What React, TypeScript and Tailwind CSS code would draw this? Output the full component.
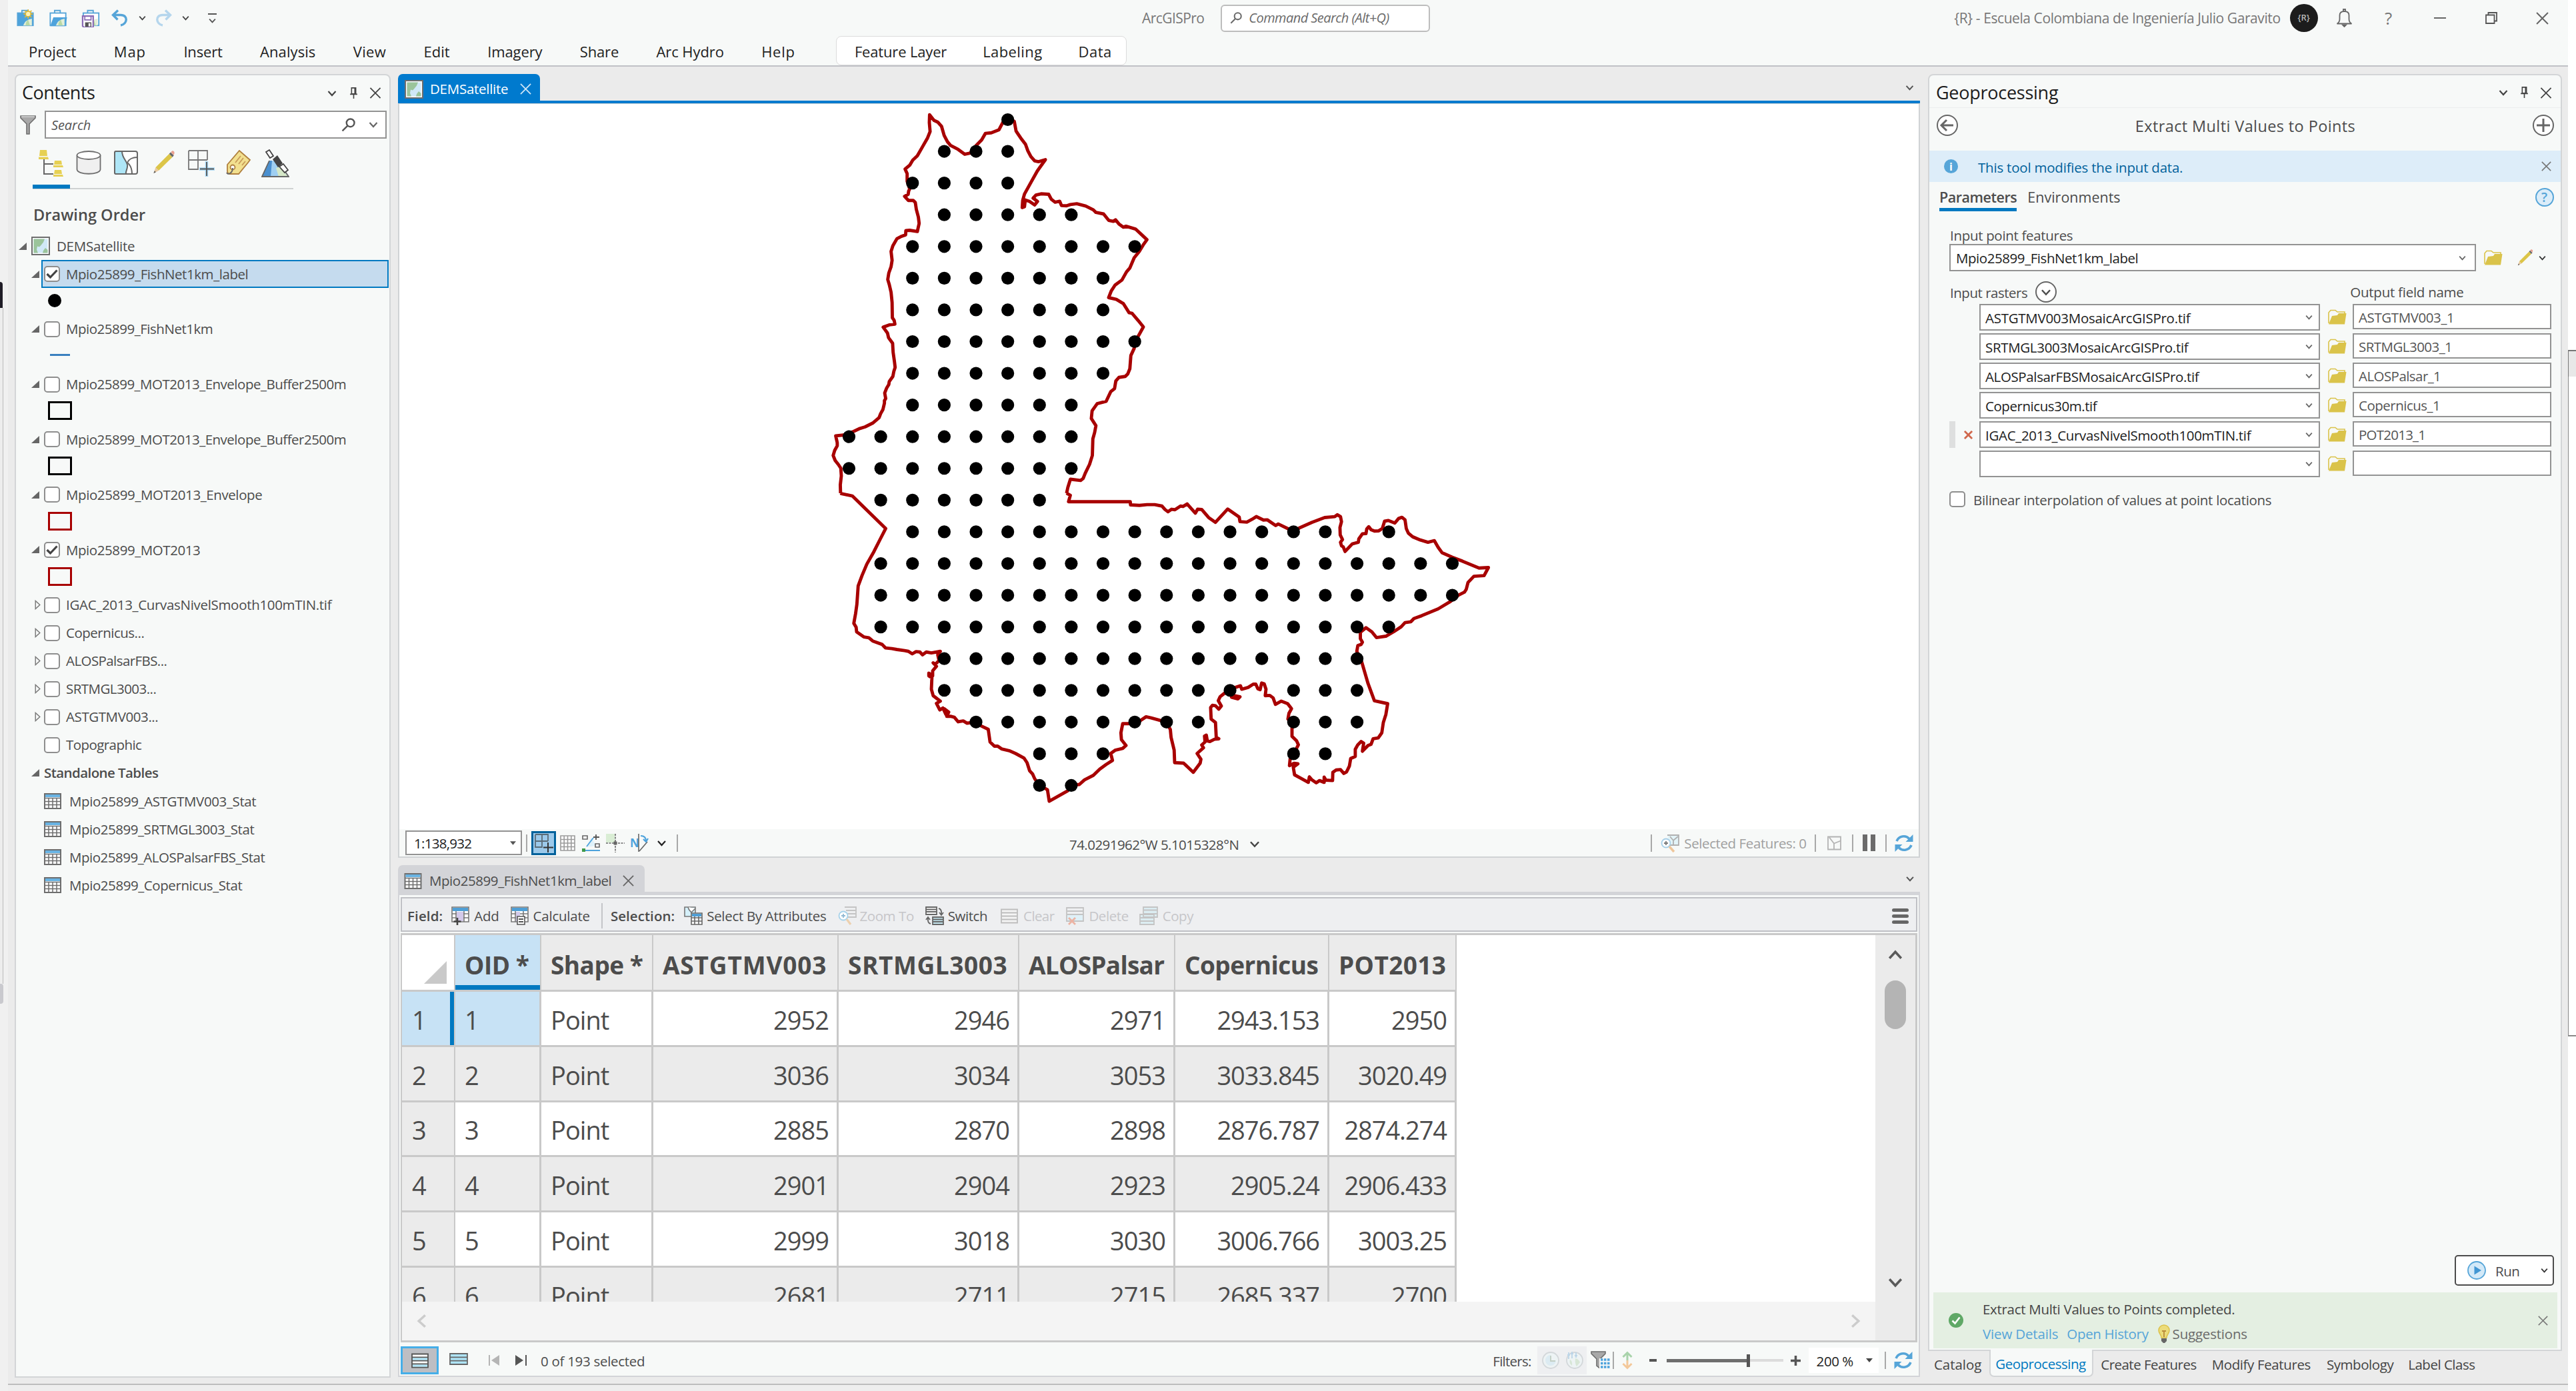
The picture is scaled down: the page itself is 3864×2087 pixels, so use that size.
import React, { useLayoutEffect, useRef } from "react";

/* Text run whose tracking is adjusted so that it fills the given width. */
function T({ w, className = "", children }: { w: number; className?: string; children: string }) {
  const ref = useRef<HTMLSpanElement>(null);
  useLayoutEffect(() => {
    const el = ref.current;
    if (!el) return;
    el.style.letterSpacing = "0px";
    const natural = el.getBoundingClientRect().width;
    el.style.letterSpacing = `${(w + 0.3 - natural) / children.length}px`;
  }, [w, children]);
  return (
    <span ref={ref} className={`shrink-0 whitespace-pre ${className}`}>
      {children}
    </span>
  );
}

type IconProps = { className?: string };

const Chevron = ({ className = "" }: IconProps) => (
  <svg viewBox="0 0 14 10" className={`shrink-0 ${className}`} fill="none" stroke="currentColor" strokeWidth="2.2">
    <path d="M1.5 2 7 8l5.500-6" />
  </svg>
);
const Close = ({ className = "" }: IconProps) => (
  <svg viewBox="0 0 18 18" className={`shrink-0 ${className}`} fill="none" stroke="currentColor" strokeWidth="1.900">
    <path d="M1 1 17 17M17 1 1 17" />
  </svg>
);
const Pin = ({ className = "" }: IconProps) => (
  <svg viewBox="0 0 14 20" className={`shrink-0 ${className}`} fill="none" stroke="currentColor" strokeWidth="1.800">
    <path d="M3.500 1h7v10h-7zM1 11.500h12M7 11.500V19M9 1v10" />
  </svg>
);
const Magnifier = ({ className = "" }: IconProps) => (
  <svg viewBox="0 0 20 20" className={`shrink-0 ${className}`} fill="none" stroke="currentColor" strokeWidth="2.300">
    <circle cx="13" cy="7" r="5.600" />
    <path d="M9 11 1.500 18.500" />
  </svg>
);
const Caret = ({ className = "" }: IconProps) => (
  <svg viewBox="0 0 10 6" className={`shrink-0 ${className}`} fill="currentColor">
    <path d="M0 0h10L5 6z" />
  </svg>
);
const MapIcon = ({ className = "" }: IconProps) => (
  <svg viewBox="0 0 28 28" className={`shrink-0 ${className}`}>
    <rect x="1" y="1" width="26" height="26" fill="#fff" stroke="#6e6e6e" strokeWidth="2" />
    <rect x="3.500" y="3.500" width="21" height="21" fill="#d0e8f7" />
    <path d="M3.500 3.500H20l-2 5-4 5-2 2-3-1-1 5 2 5H3.500zM18 21l3-4 3.500 3v4.500H17z" fill="#9bc49b" />
  </svg>
);
const TableIcon = ({ className = "" }: IconProps) => (
  <svg viewBox="0 0 26 24" className={`shrink-0 ${className}`}>
    <rect x="1" y="1" width="24" height="22" fill="#fff" stroke="#6e6e6e" strokeWidth="2" />
    <rect x="2" y="2" width="22" height="4" fill="#68b3e3" />
    <path d="M1 7.500h24M1 12.500h24M1 17.500h24M7 7v16M13 7v16M19 7v16" stroke="#6e6e6e" strokeWidth="1.500" />
  </svg>
);
const Refresh = ({ className = "" }: IconProps) => (
  <svg viewBox="0 0 28 28" className={`shrink-0 ${className}`} fill="none" stroke="#56a5d8" strokeWidth="3.600">
    <path d="M3 11C6 3.500 16 1 22 7.500M25 17c-3 7.500-13 10-19 3.500" />
    <path d="M27.500 1v11h-11zM.5 27V16h11z" fill="#56a5d8" stroke="none" />
  </svg>
);
const Folder = ({ className = "" }: IconProps) => (
  <svg viewBox="0 0 28 23" className={`shrink-0 ${className}`}>
    <path d="M1 21V5l3-3.500h7L14 4h11v4" fill="none" stroke="#dac34a" strokeWidth="1.600" />
    <path d="M1 22.500 6 10l8-1 2-3h11.500L25 22.500z" fill="#dac34a" />
  </svg>
);
const Pencil = ({ className = "" }: IconProps) => (
  <svg viewBox="0 0 34 36" className={`shrink-0 ${className}`}>
    <path d="M1 35 4 26l5 4.500z" fill="#e8c9a0" />
    <path d="M1 35l1.300-4 2.300 2.200z" fill="#5b5b5b" />
    <path d="M4 26 25 5l5 5L9 30.500z" fill="#dcc548" />
    <path d="m25 5 2.200-2.500 5 5L30 10z" fill="#666" />
    <path d="m27.500 2.200 2-1.700c2-.8 4 1.500 3.500 3.500l-1 3z" fill="#ea9f8e" />
  </svg>
);
const OpenTri = ({ className = "" }: IconProps) => (
  <svg viewBox="0 0 12 11" className={`shrink-0 ${className}`}>
    <path d="M12 0v11H0z" fill="#666" />
  </svg>
);
const ClosedTri = ({ className = "" }: IconProps) => (
  <svg viewBox="0 0 9 16" className={`shrink-0 ${className}`}>
    <path d="M1 1.500v13L8 8z" fill="none" stroke="#777" strokeWidth="1.500" />
  </svg>
);
const Funnel = ({ className = "" }: IconProps) => (
  <svg viewBox="0 0 24 29" className={`shrink-0 ${className}`}>
    <path d="M1 1h22v3l-9 9v15h-4V13L1 4z" fill="#a8a8a8" stroke="#6e6e6e" strokeWidth="1.600" />
    <path d="M2 2h20" stroke="#e8e8e8" strokeWidth="1.200" />
  </svg>
);
const Sep = ({ className = "" }: IconProps) => <span className={`w-[2px] shrink-0 bg-[#a8a8a8] ${className}`} />;

function Project({ kind, className }: { kind: "new" | "open" | "save"; className: string }) {
  return (
    <svg viewBox="0 0 30 30" className={`shrink-0 ${className}`}>
      <path d="M9 7V3h9v4" fill="none" stroke="#56a5d8" strokeWidth="2" />
      <rect x="2" y="7" width="25" height="20" fill={kind === "new" ? "#4ea3dc" : "#fff"} stroke="#56a5d8" strokeWidth="2" />
      {kind === "open" && <path d="M2 28 7 14h22l-3 14z" fill="#4ea3dc" />}
      <path d="M11 27q3-9 14-11v11z" fill="#e3efd8" />
      <path d="M15 27q0-6 4-9l3 9z" fill="#b9d9a5" />
      {kind === "new" && (
        <g stroke="#dcb93a" strokeWidth="1.800" fill="#fff3b5">
          <path d="M19 1v15M11.500 8.500h15M13.500 3l11 11M24.500 3l-11 11" />
          <circle cx="19" cy="8.500" r="4.300" />
        </g>
      )}
      {kind === "save" && (
        <g>
          <path d="M1 12h17v18H3l-2-2z" fill="#fff" stroke="#8a6bb5" strokeWidth="2.400" />
          <path d="M4.500 12v6h10v-6" fill="none" stroke="#8a6bb5" strokeWidth="1.800" />
          <rect x="5" y="22" width="10" height="7" fill="#555" />
          <rect x="10.500" y="23.500" width="3" height="5" fill="#fff" />
        </g>
      )}
    </svg>
  );
}
const Undo = ({ className = "" }: IconProps) => (
  <svg viewBox="0 0 26 26" className={`shrink-0 ${className}`} fill="none" stroke="currentColor" strokeWidth="3.400">
    <path d="M3 8.500h11c12 0 10 14 0 15.500" />
    <path d="M10 1.500 2.500 8.500l7 7" />
  </svg>
);

const ribbon: [string, number][] = [
  ["Project", 71], ["Map", 48], ["Insert", 58], ["Analysis", 83], ["View", 49],
  ["Edit", 39], ["Imagery", 82], ["Share", 58], ["Arc Hydro", 101], ["Help", 50],
];

function TitleBar() {
  return (
    <header className="h-[100px] shrink-0 border-b-2 border-[#c0c1c6] bg-[#f7f9f8]">
      <div className="flex h-[54px] items-center text-[21px] text-[#777]">
        <Project kind="new" className="ml-[12px] h-[28px] w-[29px]" />
        <Project kind="open" className="ml-[20px] h-[28px] w-[29px]" />
        <Project kind="save" className="ml-[20px] h-[28px] w-[30px]" />
        <Undo className="ml-[15px] h-[26px] w-[26px] text-[#56a5d8]" />
        <Chevron className="ml-[15px] h-[8px] w-[11px] text-[#444]" />
        <Undo className="ml-[13px] h-[26px] w-[26px] -scale-x-100 text-[#b5d6ed]" />
        <Chevron className="ml-[15px] h-[8px] w-[11px] text-[#444]" />
        <span className="ml-[28px] flex flex-col items-center gap-[5px] text-[#555]">
          <span className="h-[2px] w-[13px] bg-[#555]" />
          <Chevron className="h-[8px] w-[13px]" />
        </span>
        <T w={93} className="ml-[1388px] pt-[1px]">ArcGISPro</T>
        <div className="ml-[25px] flex h-[41px] w-[314px] items-center rounded-[6px] border-2 border-[#bdbdbd] bg-white pl-[12px] text-[#6a6a6a]">
          <Magnifier className="h-[18px] w-[18px]" />
          <T w={210} className="ml-[10px] text-[20px] italic">Command Search (Alt+Q)</T>
        </div>
        <T w={489} className="ml-[786px] pt-[2px]">{"{R} - Escuela Colombiana de Ingeniería Julio Garavito"}</T>
        <span className="ml-[14px] flex h-[42px] w-[42px] shrink-0 items-center justify-center rounded-full bg-[#1c1c1c]">
          <T w={18} className="text-[13px] font-semibold text-[#b8b8b8]">{"{R}"}</T>
        </span>
        <svg viewBox="0 0 24 28" className="ml-[27px] h-[28px] w-[25px] shrink-0" fill="none" stroke="#666" strokeWidth="1.800">
          <path d="M1 22.500q4-2 4-7V10q0-6 7-6t7 6v5.500q0 5 4 7zM10.500 4V1h3v3" />
          <path d="M9.500 24.500h5L12 27z" fill="#666" />
        </svg>
        <span className="ml-[45px] w-[18px] shrink-0 text-center text-[26px] leading-none">?</span>
        <span className="ml-[59px] h-[2px] w-[18px] shrink-0 bg-[#666]" />
        <svg viewBox="0 0 18 18" className="ml-[59px] h-[18px] w-[18px] shrink-0" fill="none" stroke="#555" strokeWidth="1.800">
          <path d="M1 4.500h12.500V17H1zM4.500 4V1H17v12.500h-3.500" />
        </svg>
        <Close className="ml-[58px] h-[19px] w-[19px] text-[#666]" />
      </div>
      <div className="flex h-[44px] items-center gap-[56.400px] pl-[31px] text-[22px] text-[#222]">
        {ribbon.map(([name, w]) => (
          <T key={name} w={w} className="pt-[2px]">{name}</T>
        ))}
        <div className="ml-[5px] flex h-full w-[436px] items-center gap-[54px] rounded-[8px] border border-[#dcdcdc] bg-white pl-[27px] pt-[2px]">
          <T w={138}>Feature Layer</T>
          <T w={89}>Labeling</T>
          <T w={50}>Data</T>
        </div>
      </div>
    </header>
  );
}

function Check({ on = false }: { on?: boolean }) {
  return (
    <span className="flex h-[24px] w-[24px] shrink-0 items-center justify-center rounded-[5px] border-2 border-[#8e8e8e] bg-white">
      {on && (
        <svg viewBox="0 0 18 14" className="h-[14px] w-[18px]" fill="none" stroke="#444" strokeWidth="3.200">
          <path d="m1.500 7 5 5L16.500 1.500" />
        </svg>
      )}
    </span>
  );
}

type Layer = { name: string; w: number; on?: boolean; sym?: string; selected?: boolean };
const layers: Layer[] = [
  { name: "Mpio25899_FishNet1km_label", w: 273, on: true, sym: "dot", selected: true },
  { name: "Mpio25899_FishNet1km", w: 220, sym: "line" },
  { name: "Mpio25899_MOT2013_Envelope_Buffer2500m", w: 420, sym: "black" },
  { name: "Mpio25899_MOT2013_Envelope_Buffer2500m", w: 420, sym: "black" },
  { name: "Mpio25899_MOT2013_Envelope", w: 294, sym: "red" },
  { name: "Mpio25899_MOT2013", w: 201, on: true, sym: "red" },
];
const rasters: [string, number][] = [
  ["IGAC_2013_CurvasNivelSmooth100mTIN.tif", 398], ["Copernicus...", 117], ["ALOSPalsarFBS...", 151],
  ["SRTMGL3003...", 135], ["ASTGTMV003...", 138],
];
const tables: [string, number][] = [
  ["Mpio25899_ASTGTMV003_Stat", 280], ["Mpio25899_SRTMGL3003_Stat", 277],
  ["Mpio25899_ALOSPalsarFBS_Stat", 293], ["Mpio25899_Copernicus_Stat", 259],
];

function ListTabs() {
  return (
    <div className="ml-[25px] mt-[14px] flex h-[62px] w-[391px] shrink-0 items-start border-b-2 border-[#cfd2d2]">
      <div className="flex h-[61px] w-[56px] items-start border-b-[6px] border-[#0079c1] pl-[7px] pt-[3px]">
        <svg viewBox="0 0 40 40" className="h-[40px] w-[40px]">
          <path d="M10 14v22h14M10 21h14" fill="none" stroke="#666" strokeWidth="2" />
          <path d="M4 0h10l1 9H3zM2 10.500h14l1 3.500H2zM26 16h10l1 6H25zM24 23h14l1 3H24zM26 30h10l1 6H25zM24 37h14l1 3H24z" fill="#e6d053" />
        </svg>
      </div>
      <svg viewBox="0 0 38 36" className="ml-[9px] mt-[4px] h-[36px] w-[38px]" stroke="#6e6e6e" strokeWidth="1.800" fill="#f0f0f0">
        <path d="M1.500 7v21c0 9 35 9 35 0V7" />
        <ellipse cx="19" cy="7" rx="17.500" ry="6" fill="#fff" />
      </svg>
      <svg viewBox="0 0 36 36" className="ml-[19px] mt-[4px] h-[36px] w-[36px]" stroke="#666" strokeWidth="2">
        <rect x="1" y="1" width="34" height="34" rx="3" fill="#fff" />
        <path d="M12 1c0 10 7 14 8 20s-3 10-2 14H3q-2 0-2-2V3q0-2 2-2z" fill="#aee6f7" />
        <path d="M20 18c2-5 8-8 15-8M20 18c5 4 7 10 7 17" fill="none" />
      </svg>
      <Pencil className="ml-[22px] mt-[4px] h-[35px] w-[34px]" />
      <svg viewBox="0 0 40 40" className="ml-[19px] mt-[3px] h-[40px] w-[40px]" fill="none">
        <path d="M1 1h28v14M1 1v28h14V1M1 15h28" stroke="#777" strokeWidth="1.800" />
        <path d="M28 17v23M17 28.500h23" stroke="#a8d8f5" strokeWidth="4.500" />
        <path d="M28 18v21M18 28.500h21" stroke="#555" strokeWidth="1.800" />
      </svg>
      <svg viewBox="0 0 38 38" className="ml-[17px] mt-[3px] h-[38px] w-[38px]" stroke="#b0803f" strokeWidth="1.800">
        <path d="M2 22 20 1l16 14-3 4-14 17H5q-3-1-3-4z" fill="#f2e08f" />
        <path d="m14 19 8-10M19 21l7-9M24 23l5-6" stroke="#c89a5a" fill="none" />
        <circle cx="10" cy="26" r="3.500" fill="#fff" />
        <path d="M10 27q0 6-4 8t-5-1" fill="none" stroke="#666" />
      </svg>
      <svg viewBox="0 0 42 42" className="ml-[15px] mt-[2px] h-[42px] w-[42px]">
        <path d="M12 17h7l22 24H1z" fill="#9fcff2" />
        <path d="M12 17 1 41h13l2-24z" fill="#4a90d0" />
        <path d="m22 28 6-2 12 15H26z" fill="#d5e8c8" />
        <path d="M12 17 1 41h40L32 28" fill="none" stroke="#666" strokeWidth="1.800" />
        <path d="m17 15 7-6 8 12-7 6z" fill="#444" />
        <path d="m7 4 5-3 6 9-5 3zM27 26l6-4 7 9-5 4z" fill="#fff" stroke="#444" strokeWidth="1.800" />
      </svg>
    </div>
  );
}

function Contents() {
  return (
    <aside className="flex h-[1956px] w-[564px] shrink-0 flex-col rounded-t-[8px] border-2 border-[#d3d5d7] bg-[#f7f9f8] text-[20.500px] text-[#4c4c4c]">
      <div className="flex h-[49px] shrink-0 items-center pl-[9px] pt-[4px] text-[#444]">
        <T w={109} className="text-[27px] text-[#1d1d1d]">Contents</T>
        <Chevron className="ml-[349px] h-[10px] w-[14px]" />
        <Pin className="ml-[19px] h-[18px] w-[13px]" />
        <Close className="ml-[17px] h-[17px] w-[18px]" />
      </div>
      <div className="mt-[4px] flex h-[42px] shrink-0 items-center pl-[6px]">
        <Funnel className="h-[29px] w-[24px]" />
        <div className="ml-[13px] flex h-[42px] w-[513px] items-center border-2 border-[#939393] bg-white pl-[8px]">
          <T w={59} className="pt-[2px] text-[20px] italic text-[#555]">Search</T>
          <Magnifier className="ml-[376px] h-[21px] w-[21px] text-[#555]" />
          <Chevron className="ml-[20px] h-[10px] w-[14px] text-[#666]" />
        </div>
      </div>
      <ListTabs />
      <T w={168} className="ml-[26px] mt-[21px] self-start text-[23.500px] font-semibold leading-[34px]">Drawing Order</T>
      <div className="mt-[9px] flex h-[42px] shrink-0 items-center pl-[4px]">
        <OpenTri className="h-[11px] w-[12px]" />
        <MapIcon className="ml-[7px] h-[28px] w-[28px]" />
        <T w={117} className="ml-[10px]">DEMSatellite</T>
      </div>
      {layers.map((l, i) => (
        <div key={i} className="shrink-0">
          <div className="flex h-[42px] items-center pl-[23px]">
            <OpenTri className="h-[11px] w-[12px]" />
            <div className={`ml-[3px] flex h-[42px] w-[521px] items-center border-2 pl-[2px] ${l.selected ? "border-[#0079c1] bg-[#c5dbee]" : "border-transparent"}`}>
              <Check on={l.on} />
              <T w={l.w} className="ml-[9px]">{l.name}</T>
            </div>
          </div>
          <div className="flex h-[40.800px] items-center pl-[48px]">
            {l.sym === "dot" && <span className="mb-[2px] h-[20px] w-[20px] rounded-full bg-black" />}
            {l.sym === "line" && <span className="mb-[5px] ml-[3px] h-[3px] w-[30px] bg-[#3a80bf]" />}
            {l.sym === "black" && <span className="mb-[3px] h-[28px] w-[36px] border-[3px] border-black" />}
            {l.sym === "red" && <span className="mb-[3px] h-[28px] w-[36px] border-[3px] border-[#a80000]" />}
          </div>
        </div>
      ))}
      {rasters.map(([name, w]) => (
        <div key={name} className="flex h-[42px] shrink-0 items-center pl-[28px]">
          <ClosedTri className="h-[15px] w-[9px]" />
          <span className="ml-[5px]"><Check /></span>
          <T w={w} className="ml-[9px]">{name}</T>
        </div>
      ))}
      <div className="flex h-[42px] shrink-0 items-center pl-[42px]">
        <Check />
        <T w={113} className="ml-[9px]">Topographic</T>
      </div>
      <div className="flex h-[42px] shrink-0 items-center pl-[23px]">
        <OpenTri className="h-[11px] w-[12px]" />
        <T w={171} className="ml-[7px] font-semibold">Standalone Tables</T>
      </div>
      {tables.map(([name, w]) => (
        <div key={name} className="flex h-[42px] shrink-0 items-center pl-[42px] pt-[1px]">
          <TableIcon className="h-[24px] w-[26px]" />
          <T w={w} className="ml-[12px]">{name}</T>
        </div>
      ))}
    </aside>
  );
}

/* Fishnet rows: inclusive column ranges of the 1 km points inside the boundary. */
const fishnet: [number, number][][] = [
  [[5, 5]], [[3, 5]], [[2, 5]], [[3, 7]], [[2, 9]], [[2, 8]], [[2, 8]], [[2, 9]], [[2, 8]], [[2, 7]], [[0, 7]],
  [[0, 7]], [[1, 6]], [[2, 15], [17, 17]], [[1, 19]], [[1, 19]], [[1, 17]], [[3, 16]], [[3, 12], [14, 16]],
  [[4, 11], [14, 16]], [[6, 8], [14, 15]], [[6, 7]],
];
const north =
  "159,1568 158,1535 162,1500 160,1470 150,1455 138,1440 130,1420 136,1400 146,1382 146,1370 140,1343 170,1340 205,1328 235,1314 255,1308 285,1293 310,1272 316,1256 325,1240 331,1215 331,1205 336,1197 332,1175 340,1155 348,1142 350,1130 364,1110 368,1090 373,1075 370,1050 365,1015 363,980 347,958 343,940 326,917 350,908 372,905 369,890 362,880 361,820 357,780 350,750 344,730 348,705 357,680 361,655 357,620 364,598 380,570 395,562 414,555 415,538 430,537 460,542 467,510 464,485 456,455 452,428 444,420 425,420 410,404 424,396 426,383 430,375 420,345 420,315 412,297 430,282 442,262 460,245 480,210 500,175 510,150 507,115 508,84 525,106 540,113 555,130 565,165 578,190 590,204 620,220 646,239 668,234 690,205 712,183 727,157 750,155 780,143 800,105 814,95 840,110 847,148 865,175 884,200 893,225 905,248 920,265 935,268 962,260 930,305 905,350 880,395 873,420 871,448 880,445 883,418 900,424 920,438 931,424 914,411 925,399 945,394 975,396 985,415 1000,427 1018,423 1025,440 1045,441 1060,436 1085,433 1120,442 1150,457 1160,467 1190,473 1210,498 1228,502 1237,496 1250,512 1268,525 1278,521 1315,532 1340,555 1360,574 1345,595 1330,620 1310,645 1293,685 1280,700 1262,732 1235,752 1220,775 1210,801 1240,808 1268,825 1290,860 1302,863 1325,890 1346,916 1330,945 1313,975 1310,1000 1297,1028 1293,1080 1285,1100 1275,1110 1250,1114 1238,1128 1233,1158 1218,1170 1200,1208 1165,1217 1145,1245 1142,1275 1160,1303 1155,1330 1148,1355 1146,1420 1135,1455 1118,1490 1110,1510 1100,1518 1060,1513 1050,1545 1045,1568";
const east =
  "-262,116 -247,125 -254,153 -12,153 -11,167 24,169 54,166 84,166 112,172 124,187 136,197 150,186 163,188 185,172 195,174 211,163 243,203 252,186 268,187 295,222 322,243 370,185 415,220 418,240 445,242 465,230 482,218 510,233 525,232 558,257 568,250 605,270 628,283 650,268 700,243 750,222 790,218 800,210 812,218 816,240 810,265 811,298 820,318 812,330 816,345 823,350 830,370 858,337 882,330 884,315 898,293 912,292 915,272 923,262 932,275 945,281 962,280 976,270 985,238 1000,235 1025,246 1040,226 1053,221 1065,232 1070,270 1078,290 1095,306 1125,320 1155,330 1180,323 1195,352 1210,375 1250,395 1290,412 1355,442 1392,440 1375,475 1335,478 1312,505 1305,535 1298,547 1275,560 1240,590 1195,620 1130,650 1100,662 1088,676 1065,680 1050,698 1020,720 990,739 953,745 935,720 912,702 890,722 890,750 898,765 893,775 880,780 876,805 895,850 920,945 945,1020 997,1033 990,1080 980,1115 974,1160 960,1182 940,1186 932,1210 920,1215 898,1240 903,1205 893,1198 880,1212 870,1232 870,1263 852,1272 847,1305 836,1330 825,1337 812,1320 795,1322 782,1332 781,1368 755,1366 748,1353 748,1376 730,1368 717,1378 700,1365 690,1352 686,1376 660,1360 632,1343 627,1310 645,1295 630,1293 612,1303 615,1270 628,1253 647,1212 640,1195 622,1175 622,1140 628,1113 606,1100 610,1075 620,1055 605,1033 580,1022 557,1036 548,1008 535,997 517,998 520,970 513,947 503,943 497,972 488,968 480,948 470,948 450,962 425,970 420,955 400,962 377,977 385,1005 410,1012 418,1003 395,998 377,977 360,985 340,1003 333,1020 345,1043 335,1057 322,1042 310,1040 303,1050 305,1100 322,1115 325,1180 335,1186 318,1188 300,1198 290,1195 286,1170 279,1174 281,1200 268,1213 275,1225 250,1250 265,1275 262,1292 235,1332 197,1292 162,1290 160,1235 148,1180 145,1145 129,1113 70,1095 50,1090 30,1105 7,1113";
const south =
  "1313,1113 1290,1120 1265,1120 1258,1160 1260,1190 1278,1215 1265,1228 1235,1236 1218,1250 1225,1280 1200,1298 1175,1318 1150,1345 1115,1365 1095,1385 1062,1389 1050,1412 977,1458 970,1408 939,1389 920,1360 912,1340 900,1325 890,1290 878,1270 845,1250 820,1238 790,1230 775,1218 762,1218 745,1200 738,1145 710,1130 690,1113 655,1118 640,1108 620,1112 605,1092 590,1088 575,1088 583,1070 565,1055 572,1080 560,1052 548,1060 535,1032 550,1022 538,1012 522,998 515,970 517,920 505,912 505,900 520,912 520,890 535,870 522,855 530,862 545,845 540,820 550,805 515,812 495,808 480,820 470,808 455,806 440,816 425,805 410,802 380,797 360,793 335,790 322,775 285,760 270,746 250,742 222,720 220,700 211,683 218,640 223,600 228,520 243,475 262,425 290,370 315,315 336,270 205,128 162,118 159,116";

function MapCanvas() {
  return (
    <svg viewBox="599 156 2279 1088" className="h-[1088px] w-[2279px] shrink-0 bg-white">
      <g fill="none" stroke="#a80000" strokeWidth="4.900" strokeLinejoin="round">
        <polyline points={north} transform="translate(1200 140) scale(.38265)" vectorEffect="non-scaling-stroke" />
        <polyline points={east} transform="translate(1700 700) scale(.38265 .34439)" vectorEffect="non-scaling-stroke" />
        <polyline points={south} transform="translate(1200 700) scale(.38265 .34439)" vectorEffect="non-scaling-stroke" />
      </g>
      {fishnet.flatMap((ranges, r) =>
        ranges.flatMap(([a, b]) =>
          Array.from({ length: b - a + 1 }, (_, k) => (
            <circle key={`${r}-${a + k}`} cx={1273.5 + 47.63 * (a + k)} cy={179.5 + 47.57 * r} r="9.600" />
          )),
        ),
      )}
    </svg>
  );
}

function MapView() {
  return (
    <section className="flex shrink-0 flex-col text-[20.500px]">
      <div className="flex h-[40px] items-end border-b-0">
        <div className="flex h-[40px] w-[213px] items-center rounded-t-[7px] bg-[#007ace] pl-[10px] pt-[5px] text-white">
          <MapIcon className="h-[28px] w-[28px]" />
          <T w={117} className="ml-[10px]">DEMSatellite</T>
          <Close className="ml-[18px] h-[17px] w-[17px] text-[#cfe6f7]" />
        </div>
        <Chevron className="mb-[15px] ml-[2048px] h-[9px] w-[13px] text-[#555]" />
      </div>
      <div className="h-[4px] bg-[#007ace]" />
      <div className="border-2 border-t-[1px] border-[#d0d3d5] bg-[#f7f9f8]">
        <MapCanvas />
        <div className="flex h-[41px] items-center text-[#4c4c4c]">
          <div className="ml-[9px] flex h-[37px] w-[175px] items-center border-2 border-[#939393] bg-white pl-[11px] text-[#1d1d1d]">
            <T w={86} className="pt-[2px]">1:138,932</T>
            <Caret className="ml-[58px] h-[6px] w-[9px] text-[#555]" />
          </div>
          <Sep className="ml-[6px] h-[26px]" />
          <div className="ml-[6px] flex h-[36px] w-[37px] items-center justify-center border-[3px] border-[#00619b] bg-[#9cc9ea]">
            <svg viewBox="0 0 28 28" className="h-[28px] w-[28px]" fill="none" stroke="#5b6b76" strokeWidth="1.800">
              <path d="M1 1h19v10M1 1v19h10V1M1 11h19" />
              <path d="M20 13v15M13 20.500h15" stroke="#333" strokeWidth="2" />
            </svg>
          </div>
          <svg viewBox="0 0 23 24" className="ml-[6px] h-[24px] w-[23px]" fill="#fff" stroke="#9b9b9b" strokeWidth="1.600">
            <path d="M1 1h21v22H1zM1 6.500h21M1 12h21M1 17.500h21M6.200 1v22M11.500 1v22M16.800 1v22" />
          </svg>
          <svg viewBox="0 0 28 27" className="ml-[10px] h-[27px] w-[28px]" fill="none">
            <path d="M6 20 14 6l7 12z" fill="#dff1fa" />
            <path d="M4 25h23M7 19 17 6" stroke="#4ea3dc" strokeWidth="1.800" />
            <path d="M21 1v8M17 5h9" stroke="#555" strokeWidth="1.800" />
            <path d="M1 3h7v5H1zM20 15h6v5h-6z" stroke="#666" strokeWidth="1.600" fill="#fff" />
            <path d="M0 22h5v5H0z" fill="#3f9a4a" />
          </svg>
          <svg viewBox="0 0 28 28" className="ml-[8px] h-[28px] w-[28px]">
            <path d="M0 0h13v13H0z" fill="#d9edd4" />
            <path d="M14 0v28M0 14h28" stroke="#666" strokeWidth="1.600" strokeDasharray="3 1.500" />
            <path d="M11.500 11.500h5v5h-5z" fill="#666" />
          </svg>
          <div className="ml-[8px] flex items-center">
            <span className="w-[11px] text-[17px] font-bold leading-none text-[#4ea3dc]">N</span>
            <svg viewBox="0 0 17 28" className="h-[28px] w-[17px]" fill="none">
              <path d="M2 0v27M3 26 15 12" stroke="#666" strokeWidth="1.600" />
              <path d="M5 3q8 0 8 8M9 8l4 4 3-5" stroke="#4ea3dc" strokeWidth="2.200" />
            </svg>
          </div>
          <Chevron className="ml-[12px] h-[10px] w-[15px] text-[#222]" />
          <Sep className="ml-[15px] h-[26px]" />
          <T w={254} className="ml-[587px] pt-[6px]">74.0291962°W 5.1015328°N</T>
          <Chevron className="ml-[16px] mt-[4px] h-[11px] w-[16px] text-[#444]" />
          <Sep className="ml-[586px] h-[26px]" />
          <svg viewBox="0 0 28 28" className="ml-[13px] h-[28px] w-[28px]" fill="none" strokeWidth="1.800">
            <path d="M10 2h17v15H14" fill="#e3f4f8" stroke="#b0b0b0" />
            <path d="m14 4 5 6 7-6M19 10v7" stroke="#b0b0b0" />
            <circle cx="8" cy="14" r="6.500" stroke="#a6cfe8" fill="#fff" />
            <path d="M8 11v6M5 14h6" stroke="#777" />
            <path d="m13 19 7 8" stroke="#eec69b" strokeWidth="3.500" />
          </svg>
          <T w={183} className="ml-[7px] pt-[1px] text-[#a0a0a0]">Selected Features: 0</T>
          <Sep className="ml-[12px] h-[26px]" />
          <svg viewBox="0 0 21 21" className="ml-[17px] h-[22px] w-[21px]" fill="none" stroke="#b3b3b3" strokeWidth="1.800">
            <path d="M1 1h19v19H1zM3 2l7 9 10-4M10 11v9" />
          </svg>
          <Sep className="ml-[16px] h-[26px]" />
          <span className="ml-[14px] h-[25px] w-[7px] bg-[#6b6b6b]" />
          <span className="ml-[5px] h-[25px] w-[7px] bg-[#6b6b6b]" />
          <Sep className="ml-[15px] h-[26px]" />
          <Refresh className="ml-[12px] h-[28px] w-[28px]" />
        </div>
      </div>
    </section>
  );
}

const rows = [
  ["1", "Point", "2952", "2946", "2971", "2943.153", "2950"],
  ["2", "Point", "3036", "3034", "3053", "3033.845", "3020.49"],
  ["3", "Point", "2885", "2870", "2898", "2876.787", "2874.274"],
  ["4", "Point", "2901", "2904", "2923", "2905.24", "2906.433"],
  ["5", "Point", "2999", "3018", "3030", "3006.766", "3003.25"],
  ["6", "Point", "2681", "2711", "2715", "2685.337", "2700"],
];
const headers: [string, number][] = [
  ["OID *", 96], ["Shape *", 138], ["ASTGTMV003", 246], ["SRTMGL3003", 239], ["ALOSPalsar", 203], ["Copernicus", 200], ["POT2013", 161],
];
/* Digits are 20.7px wide on screen; the decimal point takes 8.4px. */
const cellWidth = (s: string) => (s === "Point" ? 87 : s.replace(".", "").length * 20.7 + (s.includes(".") ? 8.4 : 0));

function GridRow({ cells, index }: { cells: string[]; index: number }) {
  const sel = index === 0;
  const bg = sel || index % 2 === 0 ? "bg-white" : "bg-[#ebebeb]";
  return (
    <div className="grid h-[82.800px] w-[1582px] shrink-0 grid-cols-[80px_129px_168px_278px_271px_234px_231px_191px]">
      <div className={`flex items-center border-b-[3px] border-r-2 border-[#c9c9c9] pl-[15px] pt-[4px] ${sel ? "bg-[#c7e2f5] shadow-[inset_-6px_0_0_#0079c1]" : "bg-[#ebebeb]"}`}>
        <T w={20}>{cells[0]}</T>
      </div>
      {cells.map((c, i) => (
        <div
          key={i}
          className={`flex items-center border-b-[3px] border-r-[3px] border-[#c9c9c9] pt-[4px] ${sel && i === 0 ? "bg-[#c7e2f5]" : bg} ${i < 2 ? "pl-[14px]" : "justify-end pr-[12px]"}`}
        >
          <T w={cellWidth(c)}>{c}</T>
        </div>
      ))}
    </div>
  );
}

const gi = "h-[28px] w-[28px] shrink-0";
const RowsIcon = ({ faded = false, className = "" }: { faded?: boolean; className?: string }) => (
  <svg viewBox="0 0 26 22" className={`shrink-0 ${className}`} fill="#f4f4f4" stroke={faded ? "#bdbdbd" : "#666"} strokeWidth="1.800">
    <path d="M1 1h24v20H1zM1 6h24M1 11h24M1 16h24" />
  </svg>
);

function TableToolbar() {
  return (
    <div className="flex h-[52px] shrink-0 items-center border-2 border-[#bfc0c5] bg-[#eeeff1] pl-[8px] pt-[4px]">
      <T w={53} className="font-semibold">Field:</T>
      <svg viewBox="0 0 28 28" className={`ml-[13px] ${gi}`}>
        <path d="M1 1h25v22H1zM1 11h25M1 17h25M7 7v16M19 7v16" fill="#fff" stroke="#777" strokeWidth="1.600" />
        <path d="M2 2h23v5H2z" fill="#4f9fd6" />
        <path d="M8 8h10v14H8z" fill="#d3c9ea" />
        <path d="M9 17v11M3.500 22.500h11" stroke="#444" strokeWidth="2.600" />
      </svg>
      <T w={37} className="ml-[6px]">Add</T>
      <svg viewBox="0 0 28 28" className={`ml-[17px] ${gi}`}>
        <path d="M1 1h25v22H1zM1 11h25M1 17h25M7 7v16M19 7v16" fill="#fff" stroke="#777" strokeWidth="1.600" />
        <path d="M2 2h23v5H2z" fill="#4f9fd6" />
        <path d="M8 8h6v14H8z" fill="#d3c9ea" />
        <path d="M10 15h11v12H10z" fill="#fff" stroke="#555" strokeWidth="1.600" />
        <path d="M12 19h7M12 23h7" stroke="#555" strokeWidth="2" />
      </svg>
      <T w={85} className="ml-[6px]">Calculate</T>
      <span className="ml-[17px] h-[38px] w-[2px] bg-[#c4c5c9]" />
      <T w={96} className="ml-[12px] font-semibold">Selection:</T>
      <svg viewBox="0 0 28 28" className={`ml-[14px] ${gi}`} strokeWidth="1.600">
        <path d="M1 1h16v14H1z" fill="#d5f0fa" stroke="#777" />
        <path d="M6 1c1 5 4 6 5 8l6-6" fill="#fff" stroke="#777" />
        <path d="M11 10h16v17H11zM11 17h16M11 22h16M16 14v13M22 14v13" fill="#fff" stroke="#666" />
        <path d="M12 11h14v4H12z" fill="#4f9fd6" />
      </svg>
      <T w={179} className="ml-[6px]">Select By Attributes</T>
      <svg viewBox="0 0 28 28" className={`ml-[17px] ${gi}`} fill="none" strokeWidth="1.800">
        <path d="M10 1h17v15H14M12 6h15M14 11h13" stroke="#c4c4c4" />
        <circle cx="8" cy="14" r="6.500" stroke="#a6d2ea" fill="#fff" />
        <path d="M8 11v6M5 14h6" stroke="#8fb9d3" />
        <path d="m13 19 6 8" stroke="#ecd0af" strokeWidth="3.200" />
      </svg>
      <T w={81} className="ml-[5px] text-[#c6c6c9]">Zoom To</T>
      <svg viewBox="0 0 28 28" className={`ml-[17px] ${gi}`} fill="none" stroke="#666" strokeWidth="1.800">
        <path d="M1 1h16v11H1zM1 4.500h16M1 8h16" fill="#fff" />
        <path d="M11 16h16v11H11zM11 19.500h16M11 23h16" fill="#c5e6f0" />
        <path d="M20 3q5 1 4 9M21 9l3 4 3-4M8 26q-5-1-4-9M1 20l3-4 3 4" />
      </svg>
      <T w={59} className="ml-[6px]">Switch</T>
      <RowsIcon faded className="ml-[20px] h-[23px] w-[26px]" />
      <T w={46} className="ml-[8px] text-[#c6c6c9]">Clear</T>
      <svg viewBox="0 0 28 28" className={`ml-[18px] ${gi}`} fill="none" stroke="#c4c4c4" strokeWidth="1.800">
        <path d="M1 2h25v20H1zM1 7h25M1 12h25" />
        <path d="M2 13h23v8H2z" fill="#dff1f8" stroke="none" />
        <path d="m4 17 10 10M14 17 4 27" stroke="#ecb3a3" strokeWidth="2.800" />
      </svg>
      <T w={59} className="ml-[6px] text-[#c6c6c9]">Delete</T>
      <svg viewBox="0 0 28 28" className={`ml-[16px] ${gi}`} fill="#dcedf2" stroke="#c4c4c4" strokeWidth="1.800">
        <path d="M6 1h21v15H6zM6 5.500h21M6 11h21M1 12h21v15H1zM1 17h21M1 22h21" />
      </svg>
      <T w={46} className="ml-[7px] text-[#c6c6c9]">Copy</T>
      <span className="ml-auto mr-[11px] flex w-[25px] flex-col gap-[4px]">
        <span className="h-[5px] rounded-full bg-[#666]" />
        <span className="h-[5px] rounded-full bg-[#666]" />
        <span className="h-[5px] rounded-full bg-[#666]" />
      </span>
    </div>
  );
}

function TableFooter() {
  return (
    <div className="flex h-[52px] items-center pt-[2px]">
      <div className="flex h-[42px] w-[57px] items-center justify-center border-[3px] border-[#45aee8] bg-[#bdbec3]">
        <svg viewBox="0 0 26 22" className="h-[23px] w-[26px]" fill="#fff" stroke="#555" strokeWidth="1.800">
          <path d="M1 1h24v20H1zM1 6h24M1 11h24M1 16h24" />
          <path d="M2 7h22v3H2zM2 17h22v3H2z" fill="#aee4f7" stroke="none" />
        </svg>
      </div>
      <svg viewBox="0 0 28 18" className="mb-[4px] ml-[16px] h-[18px] w-[28px]" fill="#aee4f7" stroke="#666" strokeWidth="1.800">
        <path d="M1 1h26v16H1zM1 6.300h26M1 11.700h26" />
      </svg>
      <svg viewBox="0 0 17 16" className="ml-[31px] h-[16px] w-[17px]" fill="#b5b5b5"><path d="M0 0h2v16H0zM16 0v16L4 8z" /></svg>
      <svg viewBox="0 0 17 16" className="ml-[23px] h-[16px] w-[17px]" fill="#555"><path d="M15 0h2v16h-2zM0 0v16l12-8z" /></svg>
      <T w={156} className="ml-[21px] pt-[2px]">0 of 193 selected</T>
      <T w={57} className="ml-[1272px] pt-[2px]">Filters:</T>
      <div className="ml-[9px] flex h-[42px] w-[74px] items-center gap-[10px] bg-[#eeeff1] pl-[7px]">
        <svg viewBox="0 0 26 26" className="h-[26px] w-[26px]" fill="#edf3f4" stroke="#d3d7da" strokeWidth="1.800">
          <circle cx="13" cy="13" r="12" /><path d="M13 5a8 8 0 1 0 8 8h-8z" fill="#dcebf2" stroke="none" /><path d="M13 6v8h7" fill="none" stroke="#c2cfc4" />
        </svg>
        <svg viewBox="0 0 26 26" className="h-[26px] w-[26px]" fill="#edf3f4" stroke="#d3d7da" strokeWidth="1.800">
          <circle cx="13" cy="13" r="12" /><path d="M14 10q5 1 7 6l-5 6q-3-4-2-12zM6 12q4 2 3 9-5-4-3-9z" fill="#d7e6d6" stroke="none" /><path d="M4 1v10M9 0v10M15 1v8M2 5h4M7 3h4M13 6h4" stroke="#bcd5e8" />
        </svg>
      </div>
      <svg viewBox="0 0 29 28" className="ml-[6px] h-[28px] w-[29px]">
        <path d="M1 1h21v3l-8 8v14l-5-4V12L1 4z" fill="#a8a8a8" stroke="#6e6e6e" strokeWidth="1.600" />
        <path d="M13 11h16v17H13z" fill="#f7f9f8" />
        <path d="M15 13h14M15 18.500h14M15 24h14" stroke="#4ea3dc" strokeWidth="3.500" strokeDasharray="3.500 1.500" />
      </svg>
      <Sep className="ml-[4px] h-[26px]" />
      <svg viewBox="0 0 16 28" className="ml-[12px] h-[28px] w-[16px]" fill="none" strokeWidth="3">
        <path d="M8 14V3M1.500 9 8 2.500 14.500 9" stroke="#a9d3ab" /><path d="M8 14v11M1.500 19 8 25.500l6.500-6.500" stroke="#f3c89a" />
      </svg>
      <span className="ml-[25px] h-[4px] w-[11px] bg-[#555]" />
      <div className="ml-[15px] flex w-[175px] items-center">
        <span className="h-[5px] w-[120px] bg-[#6e6e6e]" />
        <span className="h-[19px] w-[5px] bg-[#555]" />
        <span className="h-[4px] w-[50px] bg-[#dcdcdc]" />
      </div>
      <svg viewBox="0 0 15 15" className="ml-[11px] h-[15px] w-[15px]" stroke="#555" strokeWidth="3.500"><path d="M7.500 0v15M0 7.500h15" /></svg>
      <div className="ml-[12px] flex h-[38px] w-[105px] items-center bg-white pl-[12px] text-[#222]">
        <T w={55} className="pt-[3px]">200 %</T>
        <Caret className="ml-[19px] h-[6px] w-[10px] text-[#444]" />
      </div>
      <Sep className="ml-[9px] h-[26px]" />
      <Refresh className="ml-[12px] h-[28px] w-[28px]" />
    </div>
  );
}

function AttributeTable() {
  return (
    <section className="mt-[11px] flex shrink-0 flex-col text-[20.500px] text-[#4c4c4c]">
      <div className="flex h-[40px] items-center">
        <div className="flex h-[40px] w-[370px] items-center rounded-t-[7px] bg-[#d3d4d8] pl-[9px] pt-[7px]">
          <TableIcon className="h-[24px] w-[27px]" />
          <T w={273} className="ml-[11px]">Mpio25899_FishNet1km_label</T>
          <Close className="ml-[17px] h-[17px] w-[17px] text-[#666]" />
        </div>
        <Chevron className="ml-[1891px] h-[9px] w-[14px] text-[#555]" />
      </div>
      <div className="h-[5px] bg-[#d3d4d8]" />
      <div className="h-[723px] border-2 border-t-0 border-[#d3d4d8] bg-[#f7f9f8] pl-[2px] pr-[2px] pt-[3px]">
        <TableToolbar />
        <div className="mt-[2px] flex h-[614px] border-[3px] border-l-2 border-[#c9c9c9] bg-white">
          <div className="flex w-[2210px] flex-col">
            <div className="h-[550px] overflow-hidden text-[38px] leading-none">
              <div className="grid h-[85px] w-[1582px] grid-cols-[80px_129px_168px_278px_271px_234px_231px_191px] text-[37px] font-bold">
                <div className="flex items-end justify-end border-b-[3px] border-r-2 border-[#c9c9c9] pb-[9px] pr-[11px]">
                  <svg viewBox="0 0 34 34" className="h-[34px] w-[34px]" fill="#c9c9c9"><path d="M34 0v34H0z" /></svg>
                </div>
                {headers.map(([h, w], i) => (
                  <div
                    key={h}
                    className={`flex items-center border-b-[3px] border-r-2 border-[#c9c9c9] pl-[14px] pt-[6px] ${i === 0 ? "bg-[#c7e2f5] shadow-[inset_0_-7px_0_#0079c1]" : "bg-[#ebebeb]"}`}
                  >
                    <T w={w}>{h}</T>
                  </div>
                ))}
              </div>
              {rows.map((r, i) => (
                <GridRow key={i} cells={r} index={i} />
              ))}
            </div>
            <div className="flex flex-1 items-center justify-between bg-[#f4f4f4] pl-[18px] pr-[18px] text-[#ccc]">
              <Chevron className="h-[16px] w-[24px] rotate-90" />
              <Chevron className="h-[16px] w-[24px] -rotate-90" />
            </div>
          </div>
          <div className="flex flex-1 flex-col items-center bg-[#ebebeb] pt-[22px] text-[#5a5a5a]">
            <Chevron className="h-[16px] w-[24px] rotate-180" />
            <span className="mt-[30px] h-[73px] w-[32px] rounded-full bg-[#b4b4b4]" />
            <Chevron className="mt-[372px] h-[16px] w-[24px]" />
          </div>
        </div>
        <TableFooter />
      </div>
    </section>
  );
}

const inputs: [string, number, string, number][] = [
  ["ASTGTMV003MosaicArcGISPro.tif", 307, "ASTGTMV003_1", 143],
  ["SRTMGL3003MosaicArcGISPro.tif", 304, "SRTMGL3003_1", 140],
  ["ALOSPalsarFBSMosaicArcGISPro.tif", 320, "ALOSPalsar_1", 123],
  ["Copernicus30m.tif", 167, "Copernicus_1", 122],
  ["IGAC_2013_CurvasNivelSmooth100mTIN.tif", 398, "POT2013_1", 100],
  ["", 0, "", 0],
];

function Geoprocessing() {
  return (
    <section className="flex w-[951px] shrink-0 flex-col text-[20.500px] text-[#4c4c4c]">
      <div className="flex h-[1916px] flex-col rounded-t-[8px] border-2 border-[#d3d5d7] bg-[#f7f9f8]">
        <div className="flex h-[49px] items-center border-b border-[#eceeee] pl-[10px] pt-[4px] text-[#444]">
          <T w={183} className="text-[27px] text-[#1d1d1d]">Geoprocessing</T>
          <Chevron className="ml-[661px] h-[10px] w-[14px]" />
          <Pin className="ml-[18px] h-[18px] w-[13px]" />
          <Close className="ml-[17px] h-[17px] w-[18px]" />
        </div>
        <div className="flex h-[52px] items-center justify-between pl-[11px] pr-[10px]">
          <svg viewBox="0 0 32 32" className="h-[32px] w-[32px]" fill="none" stroke="#666" strokeWidth="2">
            <circle cx="16" cy="16" r="15" fill="#fff" /><path d="M7 16h18M15 8l-8 8 8 8" strokeWidth="3" />
          </svg>
          <T w={330} className="pt-[3px] text-[23.500px]">Extract Multi Values to Points</T>
          <svg viewBox="0 0 32 32" className="h-[32px] w-[32px]" fill="none" stroke="#666" strokeWidth="2">
            <circle cx="16" cy="16" r="15" fill="#fff" /><path d="M6 16h20M16 6v20" strokeWidth="3" />
          </svg>
        </div>
        <div className="mt-[12px] flex h-[47px] items-center bg-[#ddedf9] pl-[22px] text-[#00619b]">
          <span className="flex h-[21px] w-[21px] items-center justify-center rounded-full bg-[#56a5d8] text-[16px] font-bold leading-none text-white">i</span>
          <T w={307} className="ml-[30px] pt-[3px] text-[20.500px]">This tool modifies the input data.</T>
          <Close className="ml-[537px] h-[15px] w-[17px] text-[#777]" />
        </div>
        <div className="flex h-[44px] items-start pl-[15px]">
          <div className="h-[44px] border-b-[5px] border-[#0079c1] pt-[7px]">
            <T w={116} className="text-[21.500px] font-semibold">Parameters</T>
          </div>
          <T w={139} className="ml-[16px] pt-[7px] text-[21.500px]">Environments</T>
          <span className="ml-[622px] mt-[9px] flex h-[28px] w-[28px] items-center justify-center rounded-full border-2 border-[#56a5d8] bg-[#dcedf9] text-[20px] font-semibold leading-none text-[#56a5d8]">?</span>
        </div>
        <T w={184} className="ml-[31px] mt-[22px] self-start leading-[28px]">Input point features</T>
        <div className="mt-[-1px] flex h-[41px] items-center pl-[30px]">
          <div className="flex h-[41px] w-[790px] items-center border-2 border-[#939393] bg-white pl-[8px] text-[#1d1d1d]">
            <T w={273} className="pt-[2px]">Mpio25899_FishNet1km_label</T>
            <Chevron className="ml-[481px] h-[8px] w-[11px] text-[#666]" />
          </div>
          <Folder className="ml-[12px] h-[23px] w-[28px]" />
          <Pencil className="ml-[22px] h-[25px] w-[24px]" />
          <Chevron className="ml-[8px] h-[8px] w-[11px] text-[#333]" />
        </div>
        <div className="mt-[15px] flex h-[32px] items-center pl-[31px]">
          <T w={116} className="pt-[2px]">Input rasters</T>
          <span className="ml-[12px] flex h-[32px] w-[32px] items-center justify-center rounded-full border-2 border-[#666] bg-white">
            <Chevron className="h-[11px] w-[16px]" />
          </span>
          <T w={170} className="ml-[440px]">Output field name</T>
        </div>
        <div className="mt-[2px] flex flex-col gap-[4px]">
          {inputs.map(([src, sw, out, ow], i) => (
            <div key={i} className="flex h-[40px] pl-[30px]">
              <div className={`flex w-[45px] items-center pl-[13px] ${i === 4 ? "shadow-[inset_9px_0_0_#dedfdf]" : ""}`}>
                {i === 4 && (
                  <svg viewBox="0 0 14 14" className="ml-[9px] h-[13px] w-[13px]" stroke="#d0674c" strokeWidth="3"><path d="M1 1l12 12M13 1 1 13" /></svg>
                )}
              </div>
              <div className="flex h-[40px] w-[511px] items-center justify-between border-2 border-[#939393] bg-white pl-[7px] pr-[9px] text-[#1d1d1d]">
                {src ? <T w={sw} className="pt-[3px]">{src}</T> : <span />}
                <Chevron className="h-[8px] w-[11px] text-[#666]" />
              </div>
              <Folder className="ml-[12px] mt-[8px] h-[23px] w-[28px]" />
              <div className="ml-[9px] flex h-[38px] w-[298px] items-center border-2 border-[#939393] bg-white pl-[7px] text-[#555]">
                {out && <T w={ow} className="pt-[3px]">{out}</T>}
              </div>
            </div>
          ))}
        </div>
        <div className="mt-[20px] flex h-[26px] items-center pl-[30px]">
          <Check />
          <T w={447} className="ml-[12px] pt-[3px]">Bilinear interpolation of values at point locations</T>
        </div>
        <div className="mt-auto flex justify-end pr-[10px]">
          <div className="flex h-[46px] w-[149px] items-center rounded-[5px] border-2 border-[#4c4c4c] bg-white pl-[17px]">
            <svg viewBox="0 0 28 28" className="h-[28px] w-[28px]"><circle cx="14" cy="14" r="13" fill="#d3e9f8" stroke="#56a5d8" strokeWidth="1.800" /><path d="M10.500 7.500v13L21 14z" fill="#4196d3" /></svg>
            <T w={36} className="ml-[14px] pt-[3px]">Run</T>
            <Chevron className="ml-[32px] h-[8px] w-[11px] text-[#333]" />
          </div>
        </div>
        <div className="mb-[2px] ml-[6px] mr-[5px] mt-[10px] flex h-[84px] items-center bg-[#e4efe2] pl-[23px]">
          <svg viewBox="0 0 22 22" className="h-[22px] w-[22px]"><circle cx="11" cy="11" r="11" fill="#5fa866" /><path d="m5.500 11.500 4 4 7-9" fill="none" stroke="#fff" strokeWidth="2.600" /></svg>
          <div className="ml-[29px] flex flex-col gap-[7px] pt-[2px] leading-[30px]">
            <div className="flex"><T w={378} className="text-[#444]">Extract Multi Values to Points completed.</T></div>
            <div className="flex items-center text-[#56a5d8]">
              <T w={113}>View Details</T>
              <T w={122} className="ml-[13px]">Open History</T>
              <svg viewBox="0 0 18 28" className="ml-[14px] h-[28px] w-[18px]">
                <path d="M9 1a8 8 0 0 1 8 8c0 5-4 6-4 11H5C5 15 1 14 1 9a8 8 0 0 1 8-8z" fill="#ecdc7a" stroke="#dcc14a" strokeWidth="1.500" />
                <path d="M6 10h6M9 10v9" stroke="#b98b3a" strokeWidth="1.800" /><path d="M5 21h8v4l-3 3H8l-3-3z" fill="#666" />
              </svg>
              <T w={112} className="ml-[4px] text-[#6a6a6a]">Suggestions</T>
            </div>
          </div>
          <Close className="ml-auto mr-[13px] h-[15px] w-[17px] text-[#777]" />
        </div>
      </div>
      <div className="flex h-[39px] items-center pl-[9px] text-[#444]">
        <T w={71} className="pt-[2px]">Catalog</T>
        <div className="ml-[12px] mt-[-2px] flex h-[41px] w-[156px] items-center rounded-b-[7px] border-2 border-t-0 border-[#d3d5d7] bg-[#f7f9f8] pl-[7px] pt-[3px] text-[#0079c1]">
          <T w={135}>Geoprocessing</T>
        </div>
        <T w={143} className="ml-[11px] pt-[2px]">Create Features</T>
        <T w={148} className="ml-[23px] pt-[2px]">Modify Features</T>
        <T w={100} className="ml-[24px] pt-[2px]">Symbology</T>
        <T w={100} className="ml-[22px] pt-[2px]">Label Class</T>
      </div>
    </section>
  );
}

export default function App() {
  return (
    <div className="flex h-[2087px] w-[3864px] overflow-hidden bg-[#ebebeb] font-['Open_Sans','Noto_Sans',sans-serif]">
      <div className="flex w-[12px] shrink-0 flex-col bg-[#f0f0f0]">
        <div className="mt-[423px] h-[39px] w-[4px] rounded-tr-[4px] bg-[#1f1c26]" />
        <div className="h-[1014px] w-[5px] border-r border-[#bbb] bg-[#ededed]" />
        <div className="h-[30px] w-[5px] rounded-r bg-[#c9c9ce]" />
      </div>
      <div className="flex w-[3840px] shrink-0 flex-col">
        <TitleBar />
        <main className="flex flex-1 border-b-2 border-[#bdbdbd] pl-[10px] pt-[11px]">
          <Contents />
          <div className="ml-[11px] flex w-[2283px] shrink-0 flex-col">
            <MapView />
            <AttributeTable />
          </div>
          <div className="ml-[12px]">
            <Geoprocessing />
          </div>
        </main>
        <div className="h-[9px] shrink-0 bg-[#eee]" />
      </div>
      <div className="flex flex-1 flex-col bg-white">
        <div className="mt-[525px] h-[40px] border-l border-t-2 border-[#777] bg-[#e8e8e8]" />
        <div className="h-[990px] border-b-2 border-l border-[#888] bg-white" />
      </div>
    </div>
  );
}
